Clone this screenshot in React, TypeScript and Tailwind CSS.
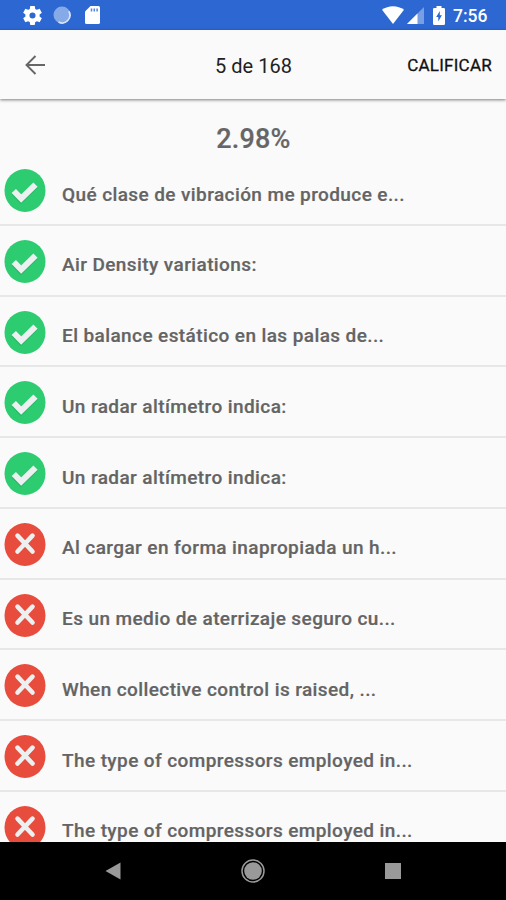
const answers = [
  { text: "Qué clase de vibración me produce e...", ok: true },
  { text: "Air Density variations:", ok: true },
  { text: "El balance estático en las palas de...", ok: true },
  { text: "Un radar altímetro indica:", ok: true },
  { text: "Un radar altímetro indica:", ok: true },
  { text: "Al cargar en forma inapropiada un h...", ok: false },
  { text: "Es un medio de aterrizaje seguro cu...", ok: false },
  { text: "When collective control is raised, ...", ok: false },
  { text: "The type of compressors employed in...", ok: false },
  { text: "The type of compressors employed in...", ok: false },
];

function ResultIcon({ ok }: { ok: boolean }) {
  return (
    <svg width="42" height="44" viewBox="0 0 42 44" className="shrink-0">
      <ellipse cx="21" cy="21.500" rx="20.5" ry="21.5" fill={ok ? "#2ecc71" : "#e74c3c"} />
      {ok ? (
        <>
          <path d="M9.500 23.100L17 30.900L31.700 16.500" fill="none" stroke="#29b765" strokeWidth="6" />
          <path d="M9.800 22L17.200 29.600L31.500 15.600" fill="none" stroke="#ecf0f1" strokeWidth="6" />
        </>
      ) : (
        <path d="M13.500 12.600L28.500 28.500M28.500 12.600L13.500 28.500" fill="none" stroke="#ecf0f1" strokeWidth="4.600" strokeLinecap="round" />
      )}
    </svg>
  );
}

function StatusBar() {
  return (
    <div className="flex h-[30px] shrink-0 items-center bg-[#2c67d2] pl-[23px] pr-[18px] text-white">
      <svg width="19" height="19" viewBox="2 2 20 20" fill="currentColor">
        <path d="M19.43 12.98c.04-.32.07-.64.07-.98s-.03-.66-.07-.98l2.11-1.65c.19-.15.24-.42.12-.64l-2-3.46c-.12-.22-.39-.3-.61-.22l-2.49 1c-.52-.4-1.08-.73-1.69-.98l-.38-2.65A.488.488 0 0 0 14 2h-4c-.25 0-.46.18-.49.42l-.38 2.65c-.61.25-1.17.59-1.69.98l-2.49-1c-.23-.09-.49 0-.61.22l-2 3.46c-.13.22-.07.49.12.64l2.11 1.65c-.04.32-.07.65-.07.98s.03.66.07.98l-2.11 1.65c-.19.15-.24.42-.12.64l2 3.46c.12.22.39.3.61.22l2.49-1c.52.4 1.08.73 1.69.98l.38 2.65c.03.24.24.42.49.42h4c.25 0 .46-.18.49-.42l.38-2.65c.61-.25 1.17-.59 1.69-.98l2.49 1c.23.09.49 0 .61-.22l2-3.46c.12-.22.07-.49-.12-.64l-2.11-1.65zM12 15.200A3.200 3.200 0 1 1 12 8.800a3.200 3.200 0 0 1 0 6.400z" />
      </svg>
      <svg width="18" height="18" viewBox="0 0 18 18" className="ml-[11px]">
        <circle cx="9" cy="9" r="8.500" fill="#86aae8" />
        <path d="M15.800 5.200A7.700 7.700 0 0 1 5.500 15.900" fill="none" stroke="#d7e4fa" strokeWidth="1.700" />
      </svg>
      <svg width="15" height="18" viewBox="0 0 15 18" className="ml-[14px]">
        <path d="M5.500 0H13.400Q15 0 15 1.600V16.400Q15 18 13.400 18H1.600Q0 18 0 16.400V5.500Z" fill="white" />
        <path d="M6.500 2.500v3M9.300 2.500v3M12.100 2.500v3" stroke="#5585da" strokeWidth="1.500" />
      </svg>
      <div className="grow" />
      <svg width="22" height="18" viewBox="0 0 22 18">
        <path d="M0 3.800C6-1.100 16-1.100 22 3.800L11 18Z" fill="white" />
      </svg>
      <svg width="17" height="17" viewBox="0 0 17 17" className="ml-[3px]">
        <path d="M17 0V17H0Z" fill="#789fe3" />
        <path d="M10.500 6.500V17H0Z" fill="white" />
      </svg>
      <svg width="12" height="19" viewBox="0 0 12 19" className="ml-[9px]">
        <path d="M3.500 0H8.500V2H10.700Q12 2 12 3.300V17.700Q12 19 10.700 19H1.300Q0 19 0 17.700V3.300Q0 2 1.300 2H3.500Z" fill="white" />
        <path d="M6.800 5L3.200 11H5.300V15.500L8.900 9.300H6.800Z" fill="#2c67d2" />
      </svg>
      <span className="ml-[8px] w-[35px] whitespace-nowrap pt-[1px] text-[17.500px] font-medium leading-[30px]">7:56</span>
    </div>
  );
}

export default function App() {
  return (
    <div className="flex h-[900px] w-[506px] flex-col overflow-hidden bg-[#fafafa] font-['Roboto',sans-serif]">
      <StatusBar />
      <header className="z-10 grid h-[69px] shrink-0 grid-cols-[150px_1fr_150px] items-center bg-[#fafafa] pl-[15px] pr-[14px] shadow-[0_1px_3px_rgba(0,0,0,0.5)]">
        <svg width="21" height="20" viewBox="0 0 21 20" fill="none" stroke="#666" strokeWidth="1.900" className="ml-[10px]">
          <path d="M20 10H2M10.500 1L1.500 10L10.500 19" />
        </svg>
        <span className="whitespace-nowrap pt-[2px] text-center text-[20px] leading-6 text-[#222]">5 de 168</span>
        <span className="whitespace-nowrap text-right text-[17px] leading-6 tracking-[0.250px] text-[#111] [-webkit-text-stroke:0.300px_#111]">CALIFICAR</span>
      </header>
      <main className="min-h-0 grow overflow-hidden">
        <h1 className="h-[56px] pl-px pt-[24px] text-center text-[27px] font-medium leading-8 tracking-[0.200px] text-[#666] [-webkit-text-stroke:0.200px_#666]">2.98%</h1>
        <ul>
          {answers.map((answer, i) => (
            <li key={i} className="flex h-[70.750px] items-start border-b-2 border-[#e6e7e7] pl-1 pt-[14px]">
              <ResultIcon ok={answer.ok} />
              <span className="ml-4 whitespace-nowrap pt-[13.500px] text-[19px] font-medium leading-6 tracking-[0.400px] text-[#646464] [-webkit-text-stroke:0.200px_#646464]">{answer.text}</span>
            </li>
          ))}
        </ul>
      </main>
      <nav className="flex h-[58px] shrink-0 items-center bg-black pl-[105px] pr-[105px]">
        <svg width="16" height="18" viewBox="0 0 16 18" fill="#999"><path d="M0.500 9L15.500 0.500V17.500Z" /></svg>
        <svg width="24" height="24" viewBox="0 0 24 24" className="mx-auto">
          <circle cx="12" cy="12" r="8.800" fill="#999" />
          <circle cx="12" cy="12" r="11" fill="none" stroke="#999" strokeWidth="1.500" />
        </svg>
        <svg width="16" height="16" viewBox="0 0 16 16"><rect width="16" height="16" fill="#999" /></svg>
      </nav>
    </div>
  );
}
